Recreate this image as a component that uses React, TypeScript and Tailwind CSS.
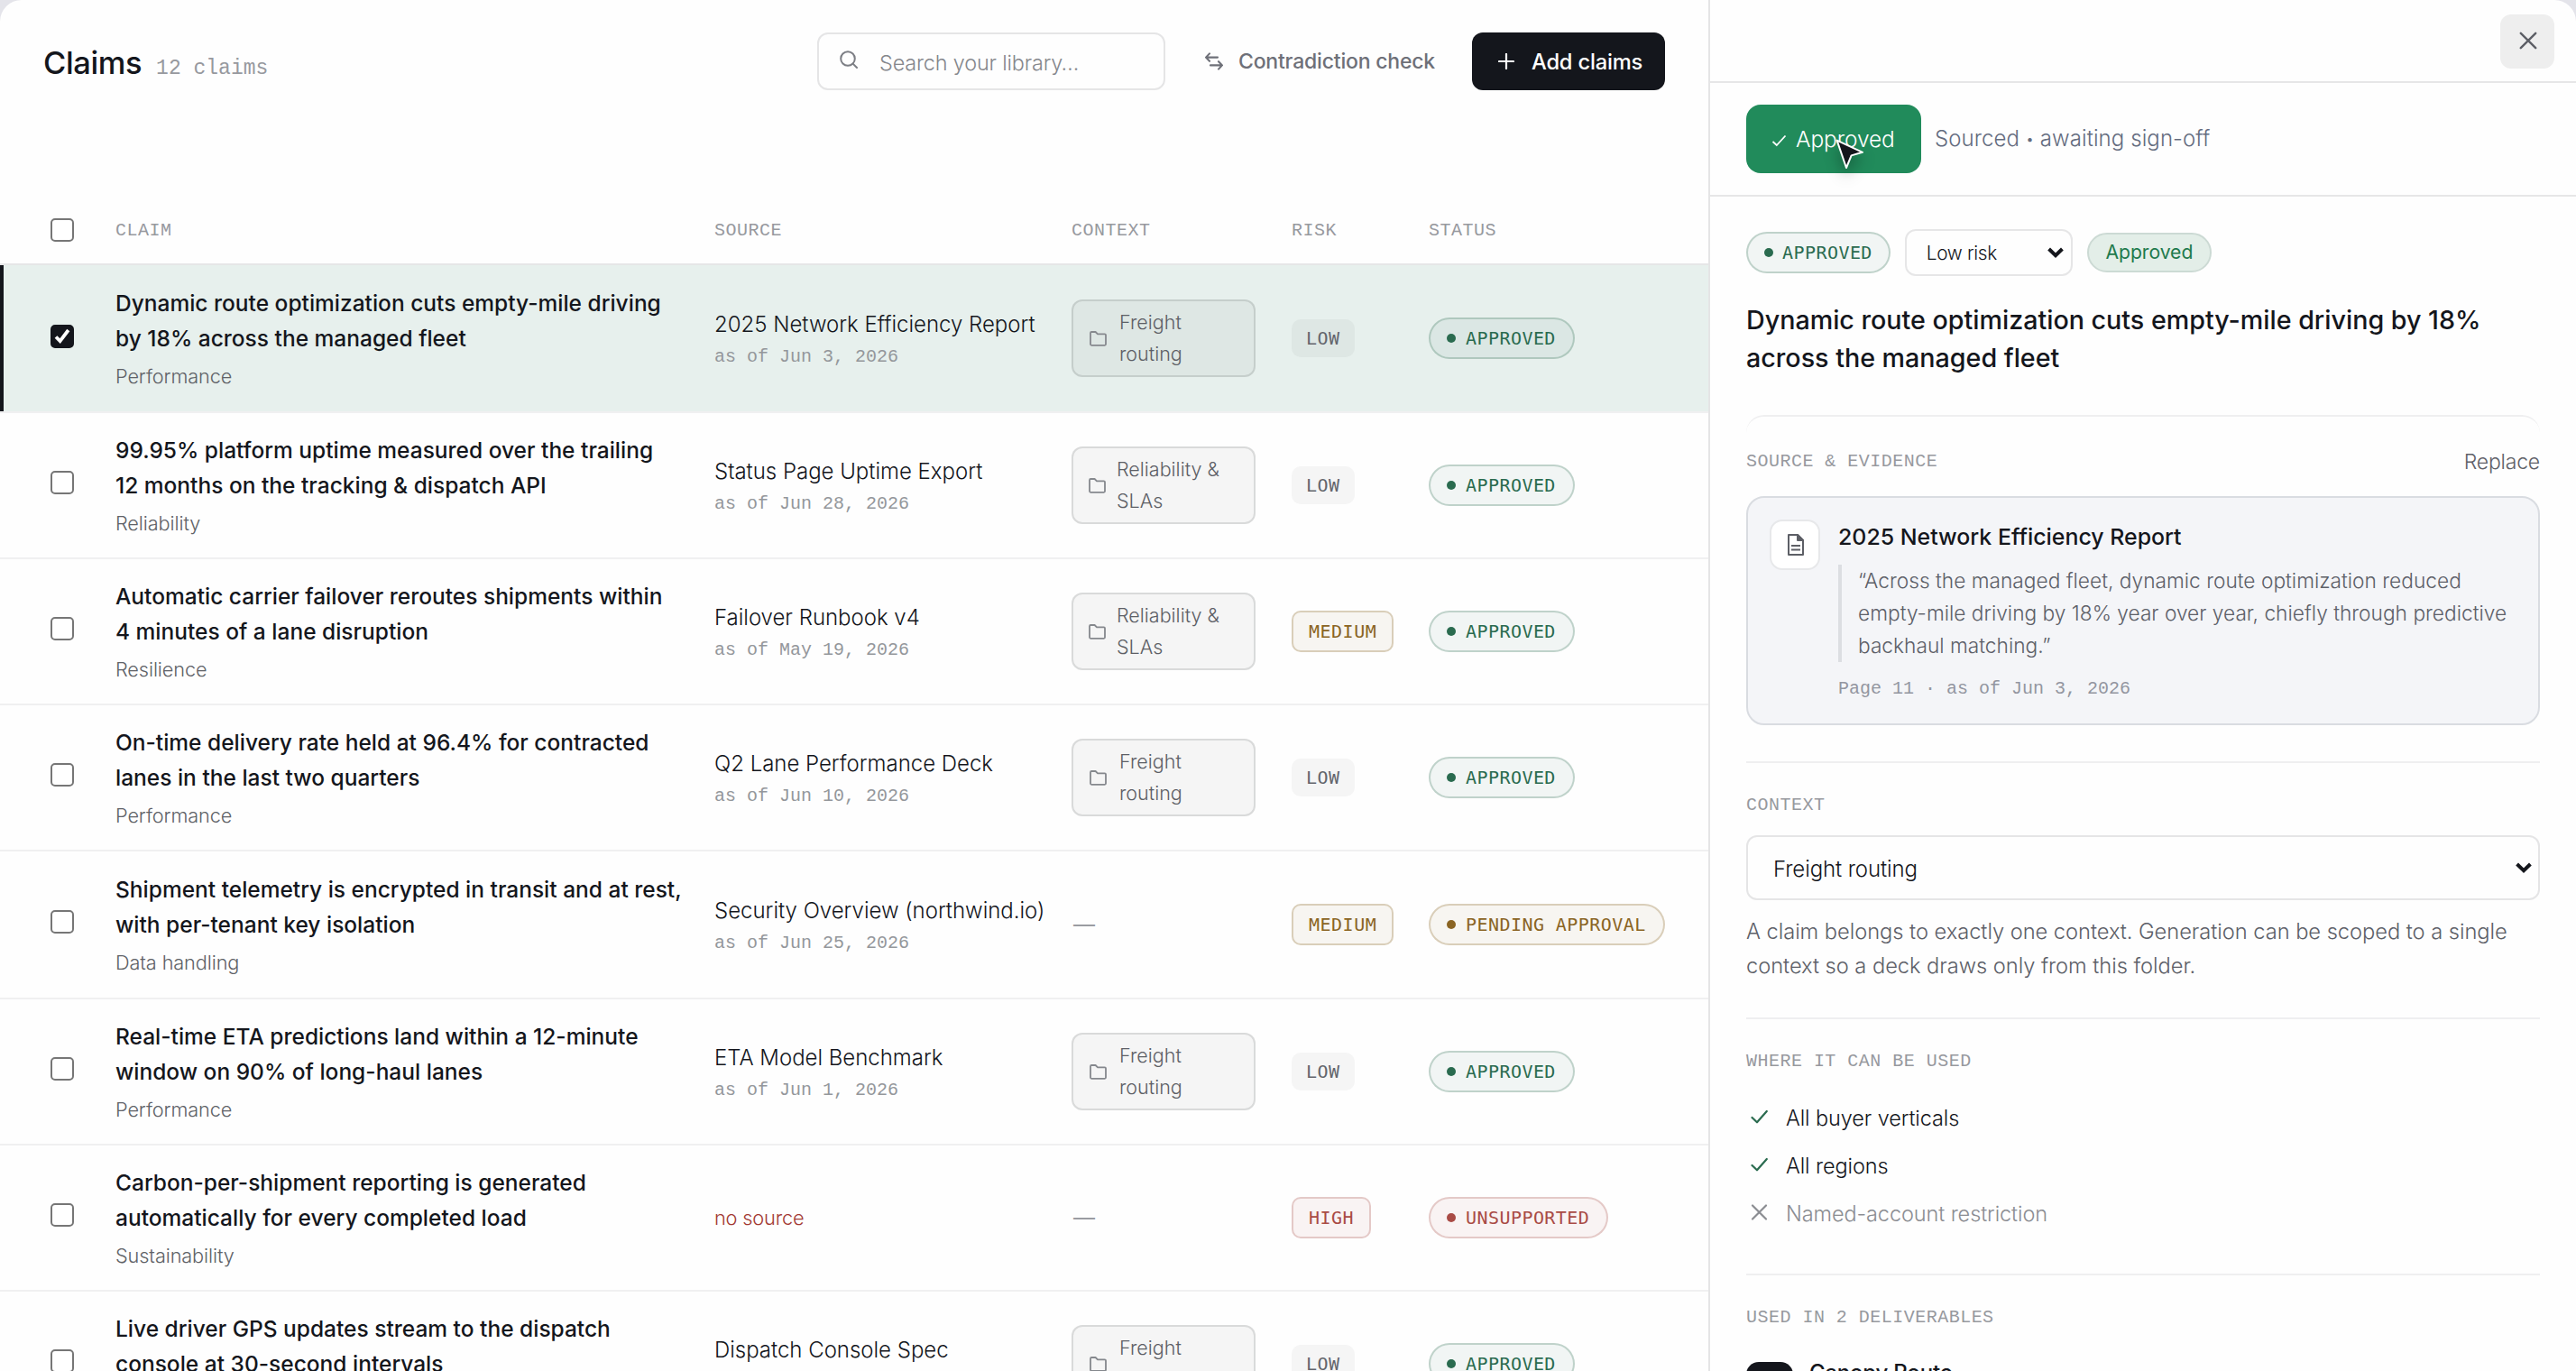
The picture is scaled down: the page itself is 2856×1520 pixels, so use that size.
import { useState, type ReactNode } from "react";
import clsx from "clsx";

type Risk = "low" | "medium" | "high";
type Status = "approved" | "pending" | "unsupported";

type Claim = {
  id: number;
  text: [string, string];
  category: string;
  source?: string;
  asOf?: string;
  context?: string;
  risk: Risk;
  status: Status;
};

const CLAIMS: Claim[] = [
  {
    id: 1,
    text: ["Dynamic route optimization cuts empty-mile driving", "by 18% across the managed fleet"],
    category: "Performance",
    source: "2025 Network Efficiency Report",
    asOf: "Jun 3, 2026",
    context: "Freight routing",
    risk: "low",
    status: "approved",
  },
  {
    id: 2,
    text: ["99.95% platform uptime measured over the trailing", "12 months on the tracking & dispatch API"],
    category: "Reliability",
    source: "Status Page Uptime Export",
    asOf: "Jun 28, 2026",
    context: "Reliability & SLAs",
    risk: "low",
    status: "approved",
  },
  {
    id: 3,
    text: ["Automatic carrier failover reroutes shipments within", "4 minutes of a lane disruption"],
    category: "Resilience",
    source: "Failover Runbook v4",
    asOf: "May 19, 2026",
    context: "Reliability & SLAs",
    risk: "medium",
    status: "approved",
  },
  {
    id: 4,
    text: ["On-time delivery rate held at 96.4% for contracted", "lanes in the last two quarters"],
    category: "Performance",
    source: "Q2 Lane Performance Deck",
    asOf: "Jun 10, 2026",
    context: "Freight routing",
    risk: "low",
    status: "approved",
  },
  {
    id: 5,
    text: ["Shipment telemetry is encrypted in transit and at rest,", "with per-tenant key isolation"],
    category: "Data handling",
    source: "Security Overview (northwind.io)",
    asOf: "Jun 25, 2026",
    risk: "medium",
    status: "pending",
  },
  {
    id: 6,
    text: ["Real-time ETA predictions land within a 12-minute", "window on 90% of long-haul lanes"],
    category: "Performance",
    source: "ETA Model Benchmark",
    asOf: "Jun 1, 2026",
    context: "Freight routing",
    risk: "low",
    status: "approved",
  },
  {
    id: 7,
    text: ["Carbon-per-shipment reporting is generated", "automatically for every completed load"],
    category: "Sustainability",
    risk: "high",
    status: "unsupported",
  },
  {
    id: 8,
    text: ["Live driver GPS updates stream to the dispatch", "console at 30-second intervals"],
    category: "Performance",
    source: "Dispatch Console Spec",
    asOf: "Jun 12, 2026",
    context: "Freight routing",
    risk: "low",
    status: "approved",
  },
];

const GRID = "grid grid-cols-[128px_664px_396px_244px_152px_1fr]";
const MONO = "font-['Liberation_Mono',monospace]";
const MONO_BADGE = "font-['DejaVu_Sans_Mono',monospace]";

const STATUS_LABEL: Record<Status, string> = {
  approved: "APPROVED",
  pending: "PENDING APPROVAL",
  unsupported: "UNSUPPORTED",
};

const STATUS_STYLE: Record<Status, string> = {
  approved: "text-[#2a6b4f] bg-[#2a6b4f]/6 border-[#2a6b4f]/25",
  pending: "text-[#8a6423] bg-[#8a6423]/6 border-[#8a6423]/27",
  unsupported: "text-[#a94b45] bg-[#a94b45]/6 border-[#a94b45]/25",
};

const RISK_STYLE: Record<Risk, string> = {
  low: "h-[42px] px-4 text-[#63656c] bg-[#14161c]/4",
  medium: "h-[46px] px-[17px] border-2 text-[#8a6423] bg-[#8a6423]/6 border-[#8a6423]/27",
  high: "h-[46px] px-[17px] border-2 text-[#a94b45] bg-[#a94b45]/6 border-[#a94b45]/25",
};

function StatusPill({ status, compact }: { status: Status; compact?: boolean }) {
  return (
    <span
      className={clsx(
        "inline-flex h-[46px] items-center whitespace-nowrap rounded-full border-2 pl-[18px] text-[20px] tracking-[0.44px]",
        compact ? "gap-2.5 pr-[18px]" : "gap-[11px] pr-[19px]",
        MONO_BADGE,
        STATUS_STYLE[status]
      )}
    >
      <span className="size-2.5 rounded-full bg-current" />
      {STATUS_LABEL[status]}
    </span>
  );
}

function RiskBadge({ risk }: { risk: Risk }) {
  return (
    <span
      className={clsx(
        "inline-flex items-center rounded-[10px] text-[20px] tracking-[0.5px]",
        MONO_BADGE,
        RISK_STYLE[risk]
      )}
    >
      {risk.toUpperCase()}
    </span>
  );
}

function FolderIcon() {
  return (
    <svg className="h-[17px] w-[19px] shrink-0 text-[#85888d]" viewBox="0 0 19 17" fill="none" stroke="currentColor" strokeWidth="1.8" strokeLinejoin="round">
      <path d="M1 2.2Q1 1 2.2 1H6.6L9 3.4H16.8Q18 3.4 18 4.6V14.6Q18 15.8 16.8 15.8H2.2Q1 15.8 1 14.6Z" />
    </svg>
  );
}

function ContextChip({ name }: { name: string }) {
  return (
    <span
      className={clsx(
        "inline-flex w-[204px] items-center rounded-[12px] border-2 border-[#14161c]/12 bg-[#14161c]/4 py-1.5 pr-3 text-[21.5px] font-light leading-[35px] text-[#5d5f66]",
        name === "Freight routing" ? "gap-3.5 pl-[18px]" : "gap-3 pl-[17px]"
      )}
    >
      <FolderIcon />
      <span>{name}</span>
    </span>
  );
}

function Checkbox({ checked, onChange }: { checked: boolean; onChange?: () => void }) {
  return (
    <button
      role="checkbox"
      aria-checked={checked}
      onClick={onChange}
      className={clsx(
        "flex size-[26px] items-center justify-center rounded-[5px] border-2",
        checked ? "border-[#14161c] bg-[#14161c]" : "border-[#767676] bg-white"
      )}
    >
      {checked && (
        <svg className="h-[18px] w-[20px] shrink-0" viewBox="0 0 20 18" fill="none" stroke="white" strokeWidth="3.8">
          <path d="M3 9.5L7.6 14.2L16.8 2" />
        </svg>
      )}
    </button>
  );
}

function ClaimRow({ claim, checked, onToggle }: { claim: Claim; checked: boolean; onToggle: () => void }) {
  return (
    <div
      className={clsx(
        GRID,
        "relative shrink-0 items-center border-b-2 border-[#f0f0f1]",
        claim.id === 1 || claim.id === 5 ? "h-[164px]" : "h-[162px]",
        checked && "bg-[#e7f0ed]"
      )}
    >
      {checked && <span className="absolute inset-y-0 left-0 w-1 bg-[#14161c]" />}
      <div className={clsx("pl-14", checked ? "-mt-1" : "-mt-1.5")}>
        <Checkbox checked={checked} onChange={onToggle} />
      </div>
      <div>
        <div className="text-[24.5px] font-medium leading-[39px] whitespace-nowrap text-[#14161c]">
          <div>{claim.text[0]}</div>
          <div>{claim.text[1]}</div>
        </div>
        <div className="mt-1.5 text-[21.7px] font-light leading-8 tracking-[-0.1px] text-[#5f6267]">{claim.category}</div>
      </div>
      {claim.source ? (
        <div className="pt-[3px] whitespace-nowrap">
          <div className="text-[24px] font-light leading-9 tracking-[-0.02px] text-[#14161c]">{claim.source}</div>
          <div className={clsx(MONO, "mt-[3px] text-[20px] leading-[30px] text-[#94979b]")}>as of {claim.asOf}</div>
        </div>
      ) : (
        <div className="text-[21.8px] font-light tracking-[-0.2px] text-[#a33a34]">no source</div>
      )}
      <div className="flex">
        {claim.context ? <ContextChip name={claim.context} /> : <span className="pl-0.5 text-[24px] text-[#9a9ca1]">—</span>}
      </div>
      <div className="flex">
        <RiskBadge risk={claim.risk} />
      </div>
      <div className="flex">
        <StatusPill status={claim.status} />
      </div>
    </div>
  );
}

function SectionLabel({ children }: { children: ReactNode }) {
  return <div className={clsx(MONO, "text-[20px] leading-[30px] tracking-[0.48px] text-[#97999e]")}>{children}</div>;
}

function SelectArrow() {
  return (
    <svg className="h-3 w-[18px]" viewBox="0 0 18 12" fill="none" stroke="#14161c" strokeWidth="4">
      <path d="M1.6 2L9 9.2L16.4 2" />
    </svg>
  );
}

function ScopeItem({ label, allowed }: { label: string; allowed: boolean }) {
  return (
    <li
      className={clsx(
        "flex h-[53px] items-center gap-5 pl-[5px] text-[23.5px] font-light tracking-[-0.1px]",
        allowed ? "text-[#14161c]" : "text-[#8b8d92]"
      )}
    >
      <svg
        className={clsx("-mt-1 h-[18px] w-[19px]", allowed ? "text-[#2a6b4f]" : "text-[#8b8d92]")}
        viewBox="0 0 19 18"
        fill="none"
        stroke="currentColor"
        strokeWidth="2.2"
        strokeLinecap="round"
        strokeLinejoin="round"
      >
        {allowed ? <path d="M1.5 10L7 15.3L17.8 3" /> : <path d="M2 1.5L17 16.5M17 1.5L2 16.5" />}
      </svg>
      {label}
    </li>
  );
}

function ClaimDetail() {
  return (
    <aside className="flex w-[962px] shrink-0 flex-col overflow-hidden border-l-2 border-[#e5e5e6]">
      <div className="flex h-[92px] shrink-0 justify-end border-b-2 border-[#e6e6e7] pt-4 pr-6">
        <button className="flex size-[60px] items-center justify-center rounded-[12px] bg-[#eeeeee]">
          <svg className="-mt-0.5 ml-px size-[20px]" viewBox="0 0 20 20" stroke="#5d5f66" strokeWidth="2.4" strokeLinecap="round">
            <path d="M1.8 1.8L18.2 18.2M18.2 1.8L1.8 18.2" />
          </svg>
        </button>
      </div>

      <div className="flex h-[126px] shrink-0 items-center gap-4 border-b-2 border-[#e6e6e7] px-10">
        <button className="relative flex h-[76px] w-[194px] items-center rounded-[16px] bg-[#218b5b] pl-7 text-white">
          <svg className="mt-1 mr-2.5 h-[14px] w-[17px]" viewBox="0 0 17 14" fill="none" stroke="white" strokeWidth="1.8">
            <path d="M1.5 8L5.8 12L15.5 1.5" />
          </svg>
          <span className="text-[24.5px] font-light tracking-[-0.1px]">Approved</span>
          {/* pointer resting on the button */}
          <svg
            className="absolute top-[37px] left-[98px] h-[36px] w-[34px] drop-shadow-[0_8px_8px_rgba(0,0,0,0.3)]"
            viewBox="0 0 34 36"
            fill="#14161c"
            stroke="white"
            strokeWidth="2"
            strokeLinejoin="round"
          >
            <path d="M2.6 2.6L31 15.8L18.6 19.4L13 33Z" />
          </svg>
        </button>
        <span className="-ml-px text-[24px] font-light tracking-[0.08px] text-[#646c7e]">
          Sourced <span className="align-[2px] text-[16px]">•</span> awaiting sign-off
        </span>
      </div>

      <div className="px-10 pt-9">
        <div className="flex h-[52px] items-center gap-4">
          <StatusPill status="approved" compact />
          <div className="flex h-[52px] w-[186px] items-center justify-between rounded-[12px] border-2 border-[#e6e6e7] pr-2 pl-[22px] text-[20.8px] font-light tracking-[-0.35px] text-[#14161c]">
            <span className="pt-0.5">Low risk</span>
            <SelectArrow />
          </div>
          <span className="flex h-[44px] w-[138px] items-center justify-center rounded-full border-2 border-[#ccdad4] bg-[#e3eee8] text-[21.2px] tracking-[-0.05px] text-[#1f7a4d]">
            Approved
          </span>
        </div>

        <h2 className="mt-7 text-[28.7px] font-medium leading-[42px] tracking-[-0.02px] whitespace-nowrap text-[#14161c]">
          Dynamic route optimization cuts empty-mile driving by 18%
          <br />
          across the managed fleet
        </h2>

        <section className="mt-[42px] rounded-t-[20px] border-t-2 border-[#efeff0] pt-[30px]">
          <div className="flex h-10 items-center justify-between">
            <SectionLabel>SOURCE &amp; EVIDENCE</SectionLabel>
            <button className="text-[23px] font-light tracking-[-0.2px] text-[#5f6168]">Replace</button>
          </div>
          <div className="mt-[18px] flex gap-5 rounded-[20px] border-2 border-[#d9dce1] bg-[#f4f5f8] p-6">
            <div className="flex size-14 shrink-0 items-center justify-center rounded-[14px] border-2 border-[#e7e8ea] bg-white">
              <svg className="ml-0.5 h-6 w-[18px] text-[#5d5f66]" viewBox="0 0 18 24" fill="none" stroke="currentColor" strokeWidth="2" strokeLinejoin="round">
                <path d="M1 1H11L17 7V23H1Z" />
                <path d="M11 1V7H17Z" fill="currentColor" />
                <path d="M4 13H14M4 17.5H14" />
              </svg>
            </div>
            <div>
              <div className="pt-0.5 text-[24.9px] font-medium leading-[34px] text-[#14161c]">2025 Network Efficiency Report</div>
              <blockquote className="mt-3.5 border-l-4 border-[#dcdee2] pl-[18px] text-[22.7px] font-light leading-9 tracking-[0.01px] whitespace-nowrap text-[#5d6068]">
                “Across the managed fleet, dynamic route optimization reduced
                <br />
                empty-mile driving by 18% year over year, chiefly through predictive
                <br />
                backhaul matching.”
              </blockquote>
              <div className={clsx(MONO, "mt-4 text-[20px] leading-7 text-[#9396a0]")}>Page 11 · as of Jun 3, 2026</div>
            </div>
          </div>
        </section>

        <section className="mt-10 border-t-2 border-[#efeff0] pt-8">
          <SectionLabel>CONTEXT</SectionLabel>
          <div className="mt-[18px] flex h-[72px] items-center justify-between rounded-[12px] border-2 border-[#e5e5e6] pr-[7px] pl-7 text-[24px] font-light tracking-[-0.1px] text-[#14161c]">
            <span className="pt-[3px]">Freight routing</span>
            <SelectArrow />
          </div>
          <p className="mt-4 text-[23.7px] font-light leading-[38px] tracking-[-0.05px] whitespace-nowrap text-[#5d6068]">
            A claim belongs to exactly one context. Generation can be scoped to a single
            <br />
            context so a deck draws only from this folder.
          </p>
        </section>

        <section className="mt-[38px] border-t-2 border-[#efeff0] pt-8">
          <SectionLabel>WHERE IT CAN BE USED</SectionLabel>
          <ul className="mt-[21px]">
            <ScopeItem label="All buyer verticals" allowed />
            <ScopeItem label="All regions" allowed />
            <ScopeItem label="Named-account restriction" allowed={false} />
          </ul>
        </section>

        <section className="mt-10 border-t-2 border-[#efeff0] pt-8">
          <SectionLabel>USED IN 2 DELIVERABLES</SectionLabel>
          <div className="mt-[26px] flex items-start gap-[18px]">
            <span className="mt-2 size-[52px] rounded-[14px] bg-[#14161c]" />
            <span className="pt-0.5 text-[24px] font-medium leading-9 tracking-[-0.2px] text-[#14161c]">Canopy Route</span>
          </div>
        </section>
      </div>
    </aside>
  );
}

export default function App() {
  const [selected, setSelected] = useState<number[]>([1]);

  const toggle = (id: number) =>
    setSelected((prev) => (prev.includes(id) ? prev.filter((x) => x !== id) : [...prev, id]));

  return (
    <div className="h-[1520px] w-[2856px] overflow-hidden bg-[#e4e4ea] font-[Inter,sans-serif]">
      <div className="flex h-full overflow-hidden rounded-t-[24px] bg-[#fefefe]">
        <main className="flex min-w-0 flex-1 flex-col overflow-hidden">
          <header className="flex h-[216px] shrink-0 items-start pt-9 pr-12 pl-12">
            <div className="flex h-16 items-center">
              <div className="mt-[7px] flex items-baseline gap-4">
                <h1 className="text-[34.5px] font-medium leading-10 tracking-[-0.4px] text-[#14161c]">Claims</h1>
                <span className={clsx(MONO, "text-[23px] text-[#97999e]")}>12 claims</span>
              </div>
            </div>
            <div className="ml-auto flex items-center">
              <div className="flex h-16 w-[386px] items-center gap-6 rounded-[12px] border-2 border-[#e5e5e6] pl-[23px]">
                <svg className="-mt-1 size-5" viewBox="0 0 20 20" fill="none" stroke="#7c7e84" strokeWidth="2" strokeLinecap="round">
                  <circle cx="9" cy="9" r="7.8" />
                  <path d="M14.6 14.6L19 19" />
                </svg>
                <span className="pt-[3px] text-[23.4px] font-light tracking-[-0.15px] text-[#85878c]">Search your library…</span>
              </div>
              <button className="ml-11 flex w-[256px] items-center gap-[17px] text-[23px] font-medium tracking-[-0.2px] whitespace-nowrap text-[#6e7078]">
                <svg className="size-5 shrink-0" viewBox="0 0 20 20" fill="none" stroke="currentColor" strokeWidth="2.1" strokeLinecap="round" strokeLinejoin="round">
                  <path d="M14 5.6H1.2M5 1.4L1 5.6L5 9.8" />
                  <path d="M6 14.4H18.8M15 10.2L19 14.4L15 18.6" />
                </svg>
                Contradiction check
              </button>
              <button className="ml-10 flex h-16 w-[214px] items-center gap-[19px] rounded-[12px] bg-[#14161c] pl-[29px] text-[23.7px] font-medium tracking-[-0.2px] whitespace-nowrap text-white">
                <svg className="size-[18px]" viewBox="0 0 18 18" stroke="white" strokeWidth="2.2" strokeLinecap="round">
                  <path d="M9 1V17M1 9H17" />
                </svg>
                <span className="pt-0.5">Add claims</span>
              </button>
            </div>
          </header>

          <div className={clsx(GRID, MONO, "h-[78px] shrink-0 items-center border-b-2 border-[#e6e6e7] pt-1 text-[20px] tracking-[0.48px] text-[#97999e]")}>
            <div className="-mt-0.5 pl-14">
              <Checkbox checked={false} />
            </div>
            <div>CLAIM</div>
            <div>SOURCE</div>
            <div>CONTEXT</div>
            <div>RISK</div>
            <div>STATUS</div>
          </div>

          {CLAIMS.map((claim) => (
            <ClaimRow key={claim.id} claim={claim} checked={selected.includes(claim.id)} onToggle={() => toggle(claim.id)} />
          ))}
        </main>

        <ClaimDetail />
      </div>
    </div>
  );
}
